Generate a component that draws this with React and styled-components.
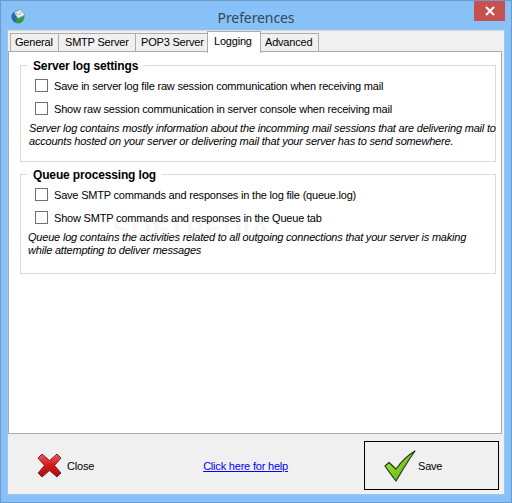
import styled, { createGlobalStyle } from 'styled-components'

const GlobalStyle = createGlobalStyle`
  html, body {
    margin: 0;
    padding: 0;
    background: #88c1f7;
  }
  * {
    box-sizing: border-box;
  }
`;

const Window = styled.div`
  width: 512px;
  height: 503px;
  display: flex;
  flex-direction: column;
  background: #88c1f7;
  border: 1px solid #6c9bcb;
  padding: 0 6px 7px 6px;
  font-family: "Liberation Sans", sans-serif;
  font-size: 11px;
  letter-spacing: -0.2px;
  color: #000;
`;

const TitleBar = styled.div`
  height: 29px;
  flex: none;
  display: flex;
  align-items: center;
  justify-content: center;
  position: relative;
`;

const TitleIcon = styled.svg`
  position: absolute;
  left: 3px;
  top: 7px;
`;

const TitleText = styled.div`
  font-family: "Noto Sans", sans-serif;
  font-size: 14px;
  letter-spacing: -0.1px;
  color: #33475a;
  padding-top: 3px;
`;

const CloseBox = styled.div`
  position: absolute;
  right: 0;
  top: 0;
  width: 31px;
  height: 20px;
  background: #c75050;
  display: flex;
  align-items: center;
  justify-content: center;
`;

const Client = styled.div`
  flex: 1;
  display: flex;
  flex-direction: column;
  background: #f0f0f0;
  border: 1px solid #dcdcdc;
  border-left-color: #9fc6ea;
  border-right-color: #9fc6ea;
  border-bottom-color: #9fc6ea;
`;

const TabStrip = styled.div`
  display: flex;
  height: 20px;
  flex: none;
  padding: 2px 0 0 2px;
  position: relative;
  z-index: 1;
`;

const Tab = styled.div`
  width: ${(p) => p.$w}px;
  height: ${(p) => (p.$active ? '22px' : '19px')};
  margin-top: ${(p) => (p.$active ? '-2px' : '0')};
  margin-left: -1px;
  padding: 0 0 ${(p) => (p.$active ? '3px' : '1px')} ${(p) => p.$pad}px;
  display: flex;
  align-items: center;
  background: ${(p) => (p.$active ? '#fff' : '#f0f0f0')};
  border: 1px solid #acacac;
  border-bottom: ${(p) => (p.$active ? 'none' : '1px solid #acacac')};
  &:first-child {
    margin-left: 0;
  }
`;

const Panel = styled.div`
  flex: 1;
  margin-right: 2px;
  background: #fff;
  border: 1px solid #acacac;
  padding: 5px 5px 0 11px;
  display: flex;
  flex-direction: column;
  gap: 4px;
  position: relative;
`;

const Watermark = styled.div`
  position: absolute;
  left: 104px;
  top: 162px;
  font-size: 26px;
  font-weight: bold;
  letter-spacing: 1px;
  color: #f7f7f7;
`;

const Group = styled.fieldset`
  margin: 0;
  padding: 1px 0 0 0;
  min-width: 0;
  border: 1px solid #dcdcdc;
  height: ${(p) => p.$height}px;
  position: relative;
  z-index: 1;
`;

const Legend = styled.legend`
  margin-left: 6px;
  padding: 2px 6px 0 6px;
  font-weight: bold;
  font-size: 12px;
  letter-spacing: -0.15px;
  line-height: 14px;
  color: #000;
`;

const OptionRow = styled.label`
  display: flex;
  align-items: center;
  gap: 6px;
  height: 23px;
  padding-left: 14px;
`;

const Box = styled.span`
  width: 13px;
  height: 13px;
  flex: none;
  background: #fff;
  border: 1px solid #707070;
`;

const Note = styled.div`
  padding: 2px 0 0 ${(p) => p.$indent}px;
  font-style: italic;
  line-height: 13px;
  white-space: nowrap;
`;

const Footer = styled.div`
  height: 60px;
  flex: none;
  display: flex;
  align-items: center;
  padding: 3px 5px 0 29px;
`;

const CloseAction = styled.div`
  display: flex;
  align-items: center;
  gap: 5px;
`;

const HelpLink = styled.a`
  margin-left: 109px;
  color: #0000ff;
  text-decoration: underline;
`;

const SaveButton = styled.div`
  margin-left: auto;
  width: 135px;
  height: 49px;
  border: 1px solid #000;
  display: flex;
  align-items: center;
  padding-left: 19px;
  gap: 2px;
`;

function MailGlobe() {
  return (
    <TitleIcon width="16" height="16" viewBox="0 0 16 16">
      <circle cx="8" cy="9" r="6.500" fill="#2f9a45" />
      <path d="M1.500 9a6.500 6.500 0 0 1 3-5.500l3 4-2 7A6.500 6.500 0 0 1 1.500 9z" fill="#2a68b8" />
      <path d="M4 4.500L11 1l4 6-7 3.500z" fill="#e4f0ee" stroke="#6f9aa0" strokeWidth="0.800" />
      <path d="M4.500 5L10 6.500L11.500 2" fill="none" stroke="#8fb4b8" strokeWidth="0.800" />
    </TitleIcon>
  );
}

function RedCross() {
  return (
    <svg width="25" height="25" viewBox="0 0 25 25">
      <defs>
        <linearGradient id="crossFill" x1="0" y1="0" x2="0" y2="1">
          <stop offset="0" stopColor="#ee5a5a" />
          <stop offset="0.5" stopColor="#d81818" />
          <stop offset="1" stopColor="#a80c0c" />
        </linearGradient>
      </defs>
      <path
        d="M5 1L12.500 7.500L20 1L24 5L17.500 12.500L24 20L20 24L12.500 17.500L5 24L1 20L7.500 12.500L1 5z"
        fill="url(#crossFill)"
        stroke="#7c2a2a"
        strokeWidth="1"
        strokeLinejoin="round"
      />
    </svg>
  );
}

function GreenCheck() {
  return (
    <svg width="32" height="32" viewBox="0 0 32 32">
      <defs>
        <linearGradient id="checkFill" x1="0" y1="0" x2="1" y2="1">
          <stop offset="0" stopColor="#b8ee3c" />
          <stop offset="1" stopColor="#46a812" />
        </linearGradient>
      </defs>
      <path
        d="M1 16L5 12.500L12 19C17 12 24 5 31 1C25 9 18 21 12 31C8 26 4.500 21 1 16z"
        fill="url(#checkFill)"
        stroke="#26331c"
        strokeWidth="1.200"
        strokeLinejoin="round"
      />
    </svg>
  );
}

export default function App() {
  return (
    <Window>
      <GlobalStyle />
      <TitleBar>
        <MailGlobe />
        <TitleText>Preferences</TitleText>
        <CloseBox>
          <svg width="10" height="10" viewBox="0 0 10 10">
            <path d="M1 1L9 9M9 1L1 9" stroke="#fff" strokeWidth="2" />
          </svg>
        </CloseBox>
      </TitleBar>
      <Client>
        <TabStrip>
          <Tab $w={49} $pad={4}>General</Tab>
          <Tab $w={78} $pad={6}>SMTP Server</Tab>
          <Tab $w={73} $pad={5}>POP3 Server</Tab>
          <Tab $w={54} $pad={6} $active>Logging</Tab>
          <Tab $w={59} $pad={4}>Advanced</Tab>
        </TabStrip>
        <Panel>
          <Watermark>SOFTPEDIA</Watermark>
          <Group $height={105}>
            <Legend>Server log settings</Legend>
            <OptionRow><Box />Save in server log file raw session communication when receiving mail</OptionRow>
            <OptionRow><Box />Show raw session communication in server console when receiving mail</OptionRow>
            <Note $indent={8}>
              Server log contains mostly information about the incomming mail sessions that are delivering mail to
              <br />
              accounts hosted on your server or delivering mail that your server has to send somewhere.
            </Note>
          </Group>
          <Group $height={108}>
            <Legend>Queue processing log</Legend>
            <OptionRow><Box />Save SMTP commands and responses in the log file (queue.log)</OptionRow>
            <OptionRow><Box />Show SMTP commands and responses in the Queue tab</OptionRow>
            <Note $indent={7}>
              Queue log contains the activities related to all outgoing connections that your server is making
              <br />
              while attempting to deliver messages
            </Note>
          </Group>
        </Panel>
        <Footer>
          <CloseAction><RedCross />Close</CloseAction>
          <HelpLink href="#">Click here for help</HelpLink>
          <SaveButton><GreenCheck />Save</SaveButton>
        </Footer>
      </Client>
    </Window>
  );
}
